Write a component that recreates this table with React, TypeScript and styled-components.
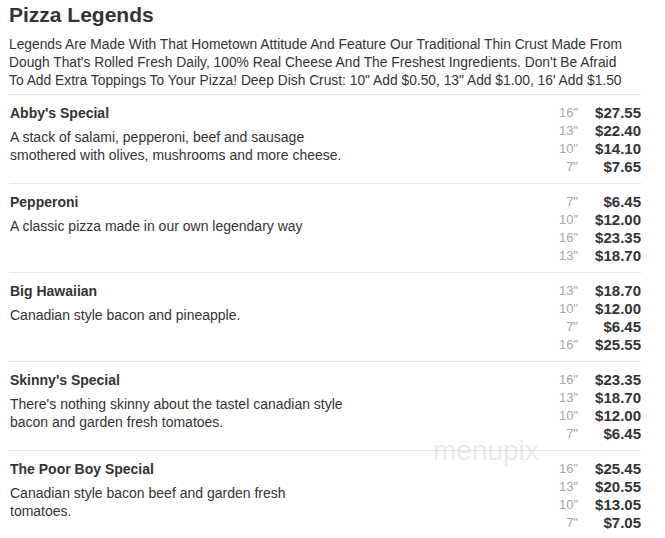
import { createGlobalStyle, styled } from 'styled-components';

type Price = { size: string; price: string };
type Pizza = { name: string; description: string; prices: Price[] };

const pizzas: Pizza[] = [
  {
    name: "Abby's Special",
    description: 'A stack of salami, pepperoni, beef and sausage smothered with olives, mushrooms and more cheese.',
    prices: [
      { size: '16"', price: '$27.55' },
      { size: '13"', price: '$22.40' },
      { size: '10"', price: '$14.10' },
      { size: '7"', price: '$7.65' },
    ],
  },
  {
    name: 'Pepperoni',
    description: 'A classic pizza made in our own legendary way',
    prices: [
      { size: '7"', price: '$6.45' },
      { size: '10"', price: '$12.00' },
      { size: '16"', price: '$23.35' },
      { size: '13"', price: '$18.70' },
    ],
  },
  {
    name: 'Big Hawaiian',
    description: 'Canadian style bacon and pineapple.',
    prices: [
      { size: '13"', price: '$18.70' },
      { size: '10"', price: '$12.00' },
      { size: '7"', price: '$6.45' },
      { size: '16"', price: '$25.55' },
    ],
  },
  {
    name: "Skinny's Special",
    description: "There's nothing skinny about the tastel canadian style bacon and garden fresh tomatoes.",
    prices: [
      { size: '16"', price: '$23.35' },
      { size: '13"', price: '$18.70' },
      { size: '10"', price: '$12.00' },
      { size: '7"', price: '$6.45' },
    ],
  },
  {
    name: 'The Poor Boy Special',
    description: 'Canadian style bacon beef and garden fresh tomatoes.',
    prices: [
      { size: '16"', price: '$25.45' },
      { size: '13"', price: '$20.55' },
      { size: '10"', price: '$13.05' },
      { size: '7"', price: '$7.05' },
    ],
  },
];

const GlobalStyle = createGlobalStyle`
  body {
    margin: 0;
    background: #fff;
    font-family: "Liberation Sans", Arial, sans-serif;
    color: #333;
  }
`;

export default function App() {
  return (
    <>
      <GlobalStyle />
      <Menu>
        <Title>Pizza Legends</Title>
        <Intro>
          Legends Are Made With That Hometown Attitude And Feature Our Traditional Thin Crust Made From
          Dough That's Rolled Fresh Daily, 100% Real Cheese And The Freshest Ingredients. Don't Be Afraid
          To Add Extra Toppings To Your Pizza! Deep Dish Crust: 10" Add $0.50, 13" Add $1.00, 16' Add $1.50
        </Intro>
        {pizzas.map((p) => (
          <Item key={p.name}>
            <Info>
              <Name>{p.name}</Name>
              <Description>{p.description}</Description>
            </Info>
            <PriceList>
              {p.prices.map((pr) => (
                <PriceRow key={pr.size}>
                  <Size>{pr.size}</Size>
                  <Amount>{pr.price}</Amount>
                </PriceRow>
              ))}
            </PriceList>
          </Item>
        ))}
        <Watermark>menupix</Watermark>
      </Menu>
    </>
  );
}

const Menu = styled.div`
  position: relative;
  width: 632px;
  margin-left: 9px;
  padding-top: 3px;
`;

const Title = styled.h1`
  margin: 0;
  font-size: 21px;
  line-height: 24px;
  font-weight: bold;
  color: #333;
`;

const Intro = styled.p`
  max-width: 618px;
  margin: 9px 0 0;
  font-size: 13.8px;
  line-height: 18px;
  color: #333;
  padding-bottom: 4px;
`;

const Item = styled.div`
  display: flex;
  justify-content: space-between;
  border-top: 1px solid #e6e6e6;
  padding: 9px 0 7px;
`;

const Info = styled.div`
  width: 337px;
  padding-left: 1px;
`;

const Name = styled.div`
  font-size: 14px;
  line-height: 18px;
  font-weight: bold;
  color: #333;
`;

const Description = styled.div`
  margin-top: 6px;
  font-size: 14px;
  line-height: 18px;
  color: #333;
`;

const PriceList = styled.div`
  display: flex;
  flex-direction: column;
`;

const PriceRow = styled.div`
  display: grid;
  grid-template-columns: 40px 63px;
  line-height: 18px;
`;

const Size = styled.span`
  text-align: right;
  font-size: 13px;
  color: #a6a6a6;
`;

const Amount = styled.span`
  text-align: right;
  font-size: 15px;
  font-weight: bold;
  color: #333;
`;

const Watermark = styled.div`
  position: absolute;
  left: 424px;
  top: 435px;
  font-size: 28px;
  font-weight: 300;
  color: rgba(180, 180, 180, 0.3);
  pointer-events: none;
`;
